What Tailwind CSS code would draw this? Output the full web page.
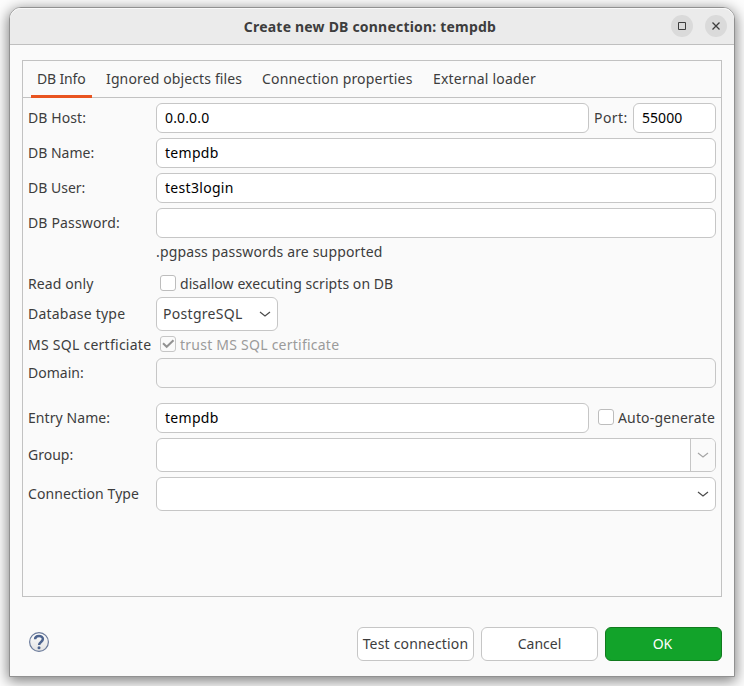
<!DOCTYPE html>
<html lang="en">
<head>
<meta charset="utf-8">
<title>Create new DB connection: tempdb</title>
<script src="https://cdn.jsdelivr.net/npm/@tailwindcss/browser@4"></script>
</head>
<body class="w-[744px] h-[686px] overflow-hidden bg-[#fdfdfd] pt-[7px] pl-[9px] font-['Noto_Sans','Open_Sans',sans-serif] text-[14px] leading-[18px] text-[#3d3d3d] whitespace-nowrap">
<main class="w-[726px] h-[670px] border border-[#919191] rounded-t-[12px] bg-[#fafafa] flex flex-col shadow-[0_3px_14px_1px_rgba(0,0,0,0.5)]">
  <header class="h-[37px] shrink-0 rounded-t-[11px] bg-[#ebebeb] border-b border-[#bfbfbf] shadow-[inset_0_1px_0_#f9f9f9] grid grid-cols-[1fr_auto_1fr] items-center">
    <span></span>
    <h1 class="font-bold text-[14px] text-[#3d3d3d] pt-px pr-[4px]"><span class="tracking-[0.2px]">Create new DB connection: tempdb</span></h1>
    <div class="flex justify-end gap-3 pr-[7px]">
      <svg class="size-[22px]" viewBox="0 0 22 22"><circle cx="11" cy="11" r="11" fill="#dadada"/><path d="M7.5 7.5h7v7h-7z" fill="none" stroke="#3d3d3d"/></svg>
      <svg class="size-[22px]" viewBox="0 0 22 22"><circle cx="11" cy="11" r="11" fill="#dadada"/><path d="M7.5 7.5l7 7m0-7l-7 7" fill="none" stroke="#3d3d3d" stroke-width="1.3"/></svg>
    </div>
  </header>
  <section class="mt-[15px] mx-3 h-[537px] shrink-0 border border-[#c2c2c2] flex flex-col">
    <nav class="h-[37px] shrink-0 border-b border-[#c2c2c2] flex items-start pl-2">
      <div class="w-[61px] h-[37px] border-b-3 border-[#e95420] pt-[9px] pl-[6px]"><span class="tracking-[-0.15px]">DB Info</span></div>
      <div class="w-[156px] pt-[9px] pl-[14px]"><span class="tracking-[0.13px]">Ignored objects files</span></div>
      <div class="w-[171px] pt-[9px] pl-[14px]"><span class="tracking-[0.18px]">Connection properties</span></div>
      <div class="pt-[9px] pl-[14px]"><span class="tracking-[0.2px]">External loader</span></div>
    </nav>
    <form class="pt-[5px] pl-[5px] pr-[5px] flex flex-col gap-[5px]">
      <div class="flex h-[30px] items-center"><label class="w-[128px]"><span class="tracking-[0.1px]">DB Host:</span></label><div class="w-[433px] h-[30px] rounded-[6px] border border-[#c6c6c6] bg-white text-black pl-2 pt-[5px]"><span class="tracking-[0.15px]">0.0.0.0</span></div><label class="w-[44px] pl-[5px]"><span class="tracking-[0.45px]">Port:</span></label><div class="flex-1 h-[30px] rounded-[6px] border border-[#c6c6c6] bg-white text-black pl-2 pt-[5px]"><span class="tracking-[0.05px]">55000</span></div></div>
      <div class="flex h-[30px] items-center"><label class="w-[128px]"><span>DB Name:</span></label><div class="flex-1 h-[30px] rounded-[6px] border border-[#c6c6c6] bg-white text-black pl-2 pt-[5px]"><span class="tracking-[0.3px]">tempdb</span></div></div>
      <div class="flex h-[30px] items-center"><label class="w-[128px]"><span>DB User:</span></label><div class="flex-1 h-[30px] rounded-[6px] border border-[#c6c6c6] bg-white text-black pl-2 pt-[5px]"><span class="tracking-[0.3px]">test3login</span></div></div>
      <div class="flex h-[30px] items-center"><label class="w-[128px]"><span class="tracking-[0.15px]">DB Password:</span></label><div class="flex-1 h-[30px] rounded-[6px] border border-[#c6c6c6] bg-white"></div></div>
      <div class="pl-[128px] h-[18px]"><span class="tracking-[0.16px]">.pgpass passwords are supported</span></div>
      <div class="flex h-[18px] mt-2 items-center"><label class="w-[132px] pt-[2px]"><span class="tracking-[0.1px]">Read only</span></label><div class="size-4 mr-1 rounded-[3px] border border-[#bdbdbd] bg-white"></div><span class="tracking-[0.06px] pt-[2px]">disallow executing scripts on DB</span></div>
      <div class="flex h-[34px] items-center"><label class="w-[128px]"><span class="tracking-[0.22px]">Database type</span></label><div class="w-[122px] h-[34px] rounded-[6px] border border-[#c6c6c6] bg-white flex items-center justify-between pl-[6px] pr-[6px]"><span class="tracking-[0.3px]">PostgreSQL</span><svg class="size-3 shrink-0" viewBox="0 0 12 12"><path d="M1 4l5 4 5-4" fill="none" stroke="#4a4a4a" stroke-width="1.2"/></svg></div></div>
      <div class="flex h-[17px] items-center"><label class="w-[132px]"><span class="tracking-[0.26px]">MS SQL certficiate</span></label><div class="size-4 mr-1 -mt-px rounded-[3px] border border-[#c6c6c6] bg-[#fafafa]"><svg class="size-[14px]" viewBox="0 0 14 14"><path d="M2 6.2l3.7 3.6 6.8-6.6" fill="none" stroke="#929292" stroke-width="2"/></svg></div><span class="tracking-[0.24px] text-[#9b9b9b]">trust MS SQL certificate</span></div>
      <div class="flex h-[30px] items-center"><label class="w-[128px]"><span>Domain:</span></label><div class="flex-1 h-[30px] rounded-[6px] border border-[#c6c6c6] bg-[#fafafa]"></div></div>
      <div class="flex h-[30px] mt-[10px] items-center"><label class="w-[128px]"><span class="tracking-[0.08px]">Entry Name:</span></label><div class="w-[433px] h-[30px] rounded-[6px] border border-[#c6c6c6] bg-white text-black pl-2 pt-[5px]"><span class="tracking-[0.3px]">tempdb</span></div><div class="size-4 ml-[9px] mr-1 -mt-[2px] rounded-[3px] border border-[#bdbdbd] bg-white"></div><span class="tracking-[0.15px]">Auto-generate</span></div>
      <div class="flex h-[34px] items-center"><label class="w-[128px]"><span>Group:</span></label><div class="flex-1 h-[34px] rounded-[6px] border border-[#c6c6c6] bg-white flex overflow-hidden"><div class="flex-1"></div><div class="w-[25px] border-l border-[#c6c6c6] bg-[#fafafa] flex items-center justify-center"><svg class="size-3" viewBox="0 0 12 12"><path d="M1 4l5 4 5-4" fill="none" stroke="#a5a5a5" stroke-width="1.2"/></svg></div></div></div>
      <div class="flex h-[34px] items-center"><label class="w-[128px]"><span class="tracking-[0.08px]">Connection Type</span></label><div class="flex-1 h-[34px] rounded-[6px] border border-[#c6c6c6] bg-white flex items-center justify-end pr-[6px]"><svg class="size-3" viewBox="0 0 12 12"><path d="M1 4l5 4 5-4" fill="none" stroke="#4a4a4a" stroke-width="1.2"/></svg></div></div>
    </form>
  </section>
  <footer class="mt-[30px] mx-3 h-[34px] flex items-center gap-[7px]">
    <svg class="size-5 ml-[7px] mr-auto relative -top-[2px]" viewBox="0 0 20 20"><defs><linearGradient id="g" x1="0" y1="0" x2="0" y2="1"><stop offset="0" stop-color="#fff"/><stop offset="1" stop-color="#e2e2e2"/></linearGradient></defs><circle cx="10" cy="10" r="9.4" fill="url(#g)" stroke="#6b7b9b" stroke-width="1.2"/><path d="M6.1 7.2C6.1 2.9 13.9 2.9 13.9 7.1c0 2.9-3.8 2.8-3.8 6" fill="none" stroke="#4d648f" stroke-width="2.5"/><circle cx="10" cy="15.8" r="1.5" fill="#4d648f"/></svg>
    <button class="w-[117px] h-[34px] rounded-[6px] border border-[#c6c6c6] bg-white"><span class="tracking-[0.18px]">Test connection</span></button>
    <button class="w-[117px] h-[34px] rounded-[6px] border border-[#c6c6c6] bg-white"><span>Cancel</span></button>
    <button class="w-[117px] h-[34px] rounded-[6px] border border-[#117a1e] bg-[#12a32a] text-white pr-[2px]"><span>OK</span></button>
  </footer>
</main>
</body>
</html>
